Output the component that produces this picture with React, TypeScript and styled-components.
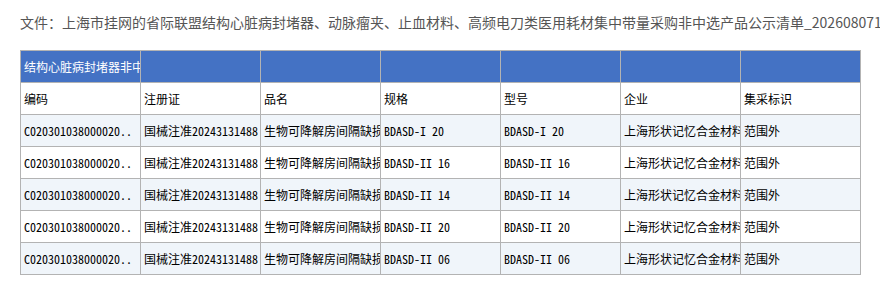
import React from "react";
import styled, { createGlobalStyle } from "styled-components";

const Global = createGlobalStyle`
  html, body { margin: 0; padding: 0; background: #fff; }
  body { font-family: "Noto Sans CJK SC", "Noto Sans", sans-serif; }
`;

const Page = styled.div`
  padding: 12px 20px 0 20px;
  width: 880px;
  box-sizing: border-box;
  overflow: hidden;
`;

const Title = styled.div`
  font-family: "Noto Sans CJK SC", "Noto Sans", sans-serif;
  font-size: 14px;
  line-height: 20px;
  color: #555;
  white-space: nowrap;
  height: 20px;
  margin-bottom: 18px;
`;

const Table = styled.table`
  border-collapse: collapse;
  table-layout: fixed;
  width: 841px;
  font-family: "Noto Sans Mono CJK SC", "Noto Sans CJK SC", "Liberation Mono", monospace;
  font-size: 12px;
`;

const Row = styled.tr<{ $variant: "title" | "head" | "odd" | "even" }>`
  background: ${(p) =>
    p.$variant === "title"
      ? "#4472C4"
      : p.$variant === "odd"
      ? "#F0F5FA"
      : "#fff"};
  color: ${(p) => (p.$variant === "title" ? "#fff" : "#000")};
`;

const Cell = styled.td`
  width: 116px;
  height: 31px;
  box-sizing: content-box;
  border: 1px solid #b3b3b3;
  padding: 0 0 0 3px;
  white-space: nowrap;
  overflow: hidden;
  text-overflow: clip;
  vertical-align: middle;
  line-height: 16px;
`;

const headers = ["编码", "注册证", "品名", "规格", "型号", "企业", "集采标识"];

const rows = [
  ["C020301038000020..", "国械注准20243131488", "生物可降解房间隔缺损封堵器", "BDASD-I 20", "BDASD-I 20", "上海形状记忆合金材料有限公司", "范围外"],
  ["C020301038000020..", "国械注准20243131488", "生物可降解房间隔缺损封堵器", "BDASD-II 16", "BDASD-II 16", "上海形状记忆合金材料有限公司", "范围外"],
  ["C020301038000020..", "国械注准20243131488", "生物可降解房间隔缺损封堵器", "BDASD-II 14", "BDASD-II 14", "上海形状记忆合金材料有限公司", "范围外"],
  ["C020301038000020..", "国械注准20243131488", "生物可降解房间隔缺损封堵器", "BDASD-II 20", "BDASD-II 20", "上海形状记忆合金材料有限公司", "范围外"],
  ["C020301038000020..", "国械注准20243131488", "生物可降解房间隔缺损封堵器", "BDASD-II 06", "BDASD-II 06", "上海形状记忆合金材料有限公司", "范围外"],
];

export default function App() {
  return (
    <Page>
      <Global />
      <Title>
        文件：上海市挂网的省际联盟结构心脏病封堵器、动脉瘤夹、止血材料、高频电刀类医用耗材集中带量采购非中选产品公示清单_20260807171520
      </Title>
      <Table>
        <tbody>
          <Row $variant="title">
            <Cell>结构心脏病封堵器非中选产品</Cell>
            {headers.slice(1).map((_, i) => (
              <Cell key={i} />
            ))}
          </Row>
          <Row $variant="head">
            {headers.map((h) => (
              <Cell key={h}>{h}</Cell>
            ))}
          </Row>
          {rows.map((r, i) => (
            <Row key={i} $variant={i % 2 === 0 ? "odd" : "even"}>
              {r.map((c, j) => (
                <Cell key={j}>{c}</Cell>
              ))}
            </Row>
          ))}
        </tbody>
      </Table>
    </Page>
  );
}
